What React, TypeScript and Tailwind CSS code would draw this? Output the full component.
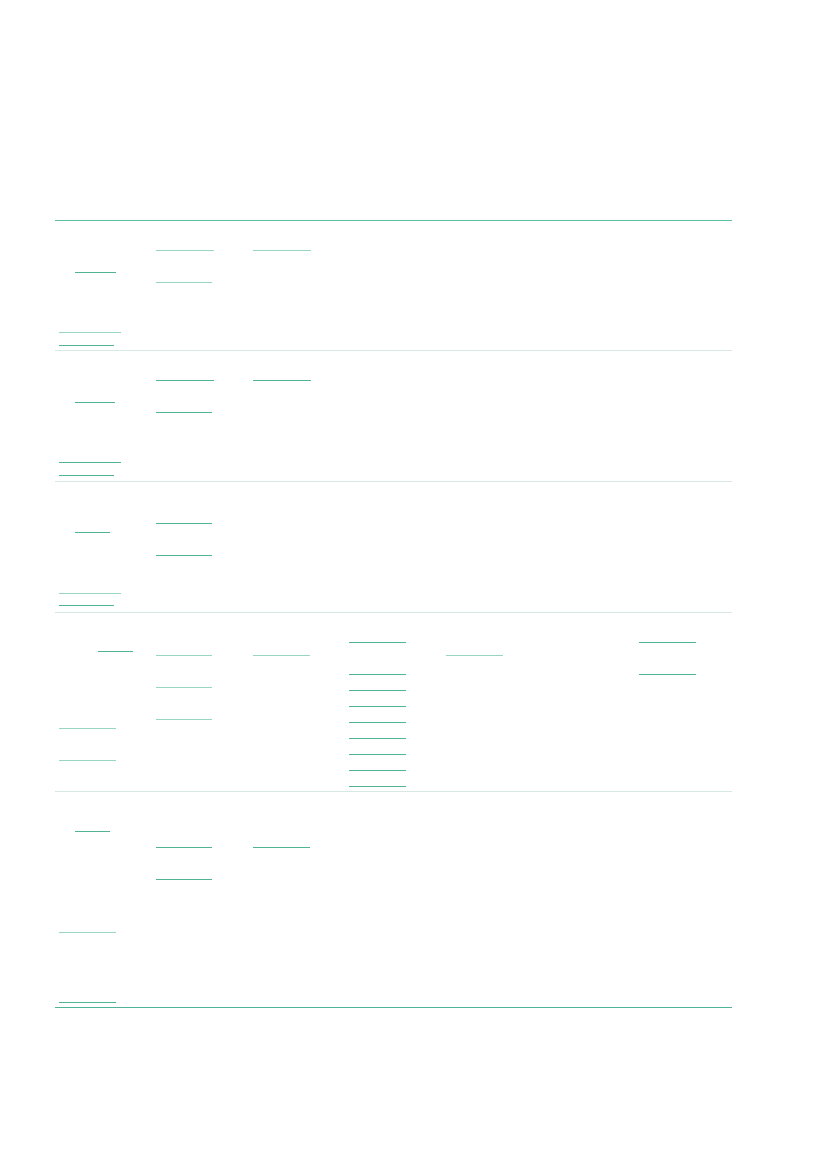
import React from "react";

type Mark = { cls: string; dark?: boolean };

const DARK = "bg-[#4fb394]";
const LIGHT = "bg-[#98d5c2]";

// each row: total height class + 7 cells of link underlines
const rows: { h: string; cells: Mark[][] }[] = [
  {
    h: "h-[130px]",
    cells: [
      [
        { cls: "ml-[20px] mt-[51px] w-[41px]", dark: true },
        { cls: "ml-[4px] mt-[59px] w-[62px]" },
        { cls: "ml-[4px] mt-[12px] w-[55px]", dark: true },
      ],
      [
        { cls: "ml-[4px] mt-[29px] w-[58px]" },
        { cls: "ml-[4px] mt-[31px] w-[56px]" },
      ],
      [{ cls: "ml-[5px] mt-[29px] w-[58px]" }],
      [],
      [],
      [],
      [],
    ],
  },
  {
    h: "h-[131px]",
    cells: [
      [
        { cls: "ml-[20px] mt-[51px] w-[40px]", dark: true },
        { cls: "ml-[4px] mt-[59px] w-[62px]", dark: true },
        { cls: "ml-[4px] mt-[12px] w-[55px]", dark: true },
      ],
      [
        { cls: "ml-[4px] mt-[29px] w-[58px]", dark: true },
        { cls: "ml-[4px] mt-[31px] w-[56px]", dark: true },
      ],
      [{ cls: "ml-[5px] mt-[29px] w-[58px]", dark: true }],
      [],
      [],
      [],
      [],
    ],
  },
  {
    h: "h-[131px]",
    cells: [
      [
        { cls: "ml-[20px] mt-[50px] w-[35px]", dark: true },
        { cls: "ml-[4px] mt-[60px] w-[62px]" },
        { cls: "ml-[4px] mt-[11px] w-[55px]", dark: true },
      ],
      [
        { cls: "ml-[4px] mt-[41px] w-[56px]", dark: true },
        { cls: "ml-[4px] mt-[31px] w-[56px]", dark: true },
      ],
      [],
      [],
      [],
      [],
      [],
    ],
  },
  {
    h: "h-[179px]",
    cells: [
      [
        { cls: "ml-[43px] mt-[38px] w-[35px]", dark: true },
        { cls: "ml-[4px] mt-[76px] w-[57px]" },
        { cls: "ml-[4px] mt-[31px] w-[57px]" },
      ],
      [
        { cls: "ml-[4px] mt-[42px] w-[56px]" },
        { cls: "ml-[4px] mt-[31px] w-[56px]" },
        { cls: "ml-[4px] mt-[31px] w-[56px]" },
      ],
      [{ cls: "ml-[5px] mt-[42px] w-[57px]" }],
      [
        { cls: "ml-[4px] mt-[29px] w-[57px]", dark: true },
        { cls: "ml-[4px] mt-[31px] w-[57px]", dark: true },
        { cls: "ml-[4px] mt-[15px] w-[57px]", dark: true },
        { cls: "ml-[4px] mt-[15px] w-[57px]", dark: true },
        { cls: "ml-[4px] mt-[15px] w-[57px]", dark: true },
        { cls: "ml-[4px] mt-[15px] w-[57px]", dark: true },
        { cls: "ml-[4px] mt-[15px] w-[57px]", dark: true },
        { cls: "ml-[4px] mt-[15px] w-[57px]", dark: true },
        { cls: "ml-[4px] mt-[15px] w-[57px]", dark: true },
      ],
      [{ cls: "ml-[4px] mt-[42px] w-[57px]" }],
      [],
      [
        { cls: "ml-[4px] mt-[29px] w-[57px]", dark: true },
        { cls: "ml-[4px] mt-[31px] w-[57px]", dark: true },
      ],
    ],
  },
  {
    h: "h-[215px]",
    cells: [
      [
        { cls: "ml-[20px] mt-[39px] w-[35px]", dark: true },
        { cls: "ml-[4px] mt-[100px] w-[57px]" },
        { cls: "ml-[4px] mt-[69px] w-[57px]", dark: true },
      ],
      [
        { cls: "ml-[4px] mt-[55px] w-[56px]", dark: true },
        { cls: "ml-[4px] mt-[31px] w-[56px]", dark: true },
      ],
      [{ cls: "ml-[5px] mt-[55px] w-[57px]", dark: true }],
      [],
      [],
      [],
      [],
    ],
  },
];

const App = () => {
  return (
    <div className="min-h-screen bg-white pt-[220px] pl-[55px] font-['Liberation_Sans',sans-serif]">
      <div className="w-[677px] border-t border-t-[#5cbea0] border-b border-b-[#4fb497]">
        {rows.map((row, r) => (
          <div
            key={r}
            className={`grid grid-cols-7 ${row.h} ${
              r < rows.length - 1 ? "border-b border-[#d8e9e3]" : ""
            }`}
          >
            {row.cells.map((cell, c) => (
              <div key={c} className="flex flex-col items-start">
                {cell.map((m, i) => (
                  <div
                    key={i}
                    className={`h-px shrink-0 ${m.cls} ${m.dark ? DARK : LIGHT}`}
                  />
                ))}
              </div>
            ))}
          </div>
        ))}
      </div>
    </div>
  );
};

export default App;
